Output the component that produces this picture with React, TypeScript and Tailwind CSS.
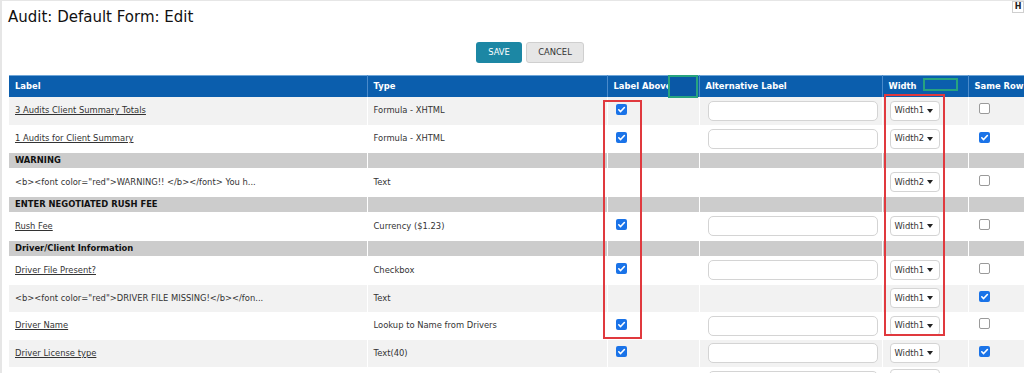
import React from "react";

type Row =
  | { kind: "group"; label: string }
  | {
      kind: "field";
      label: string;
      link: boolean;
      type: string;
      above: boolean | null;
      alt: boolean;
      width: string;
      same: boolean | null;
      shade: boolean;
      h: string;
    };

const rows: Row[] = [
  { kind: "field", label: "3 Audits Client Summary Totals", link: true, type: "Formula - XHTML", above: true, alt: true, width: "Width1", same: false, shade: true, h: "h-[28px]" },
  { kind: "field", label: "1 Audits for Client Summary", link: true, type: "Formula - XHTML", above: true, alt: true, width: "Width2", same: true, shade: false, h: "h-[28px]" },
  { kind: "group", label: "WARNING" },
  { kind: "field", label: '<b><font color="red">WARNING!! </b></font> You h...', link: false, type: "Text", above: null, alt: false, width: "Width2", same: false, shade: false, h: "h-[29px]" },
  { kind: "group", label: "ENTER NEGOTIATED RUSH FEE" },
  { kind: "field", label: "Rush Fee", link: true, type: "Currency ($1.23)", above: true, alt: true, width: "Width1", same: false, shade: false, h: "h-[29px]" },
  { kind: "group", label: "Driver/Client Information" },
  { kind: "field", label: "Driver File Present?", link: true, type: "Checkbox", above: true, alt: true, width: "Width1", same: false, shade: false, h: "h-[29px]" },
  { kind: "field", label: '<b><font color="red">DRIVER FILE MISSING!</b></fon...', link: false, type: "Text", above: null, alt: false, width: "Width1", same: true, shade: true, h: "h-[27px]" },
  { kind: "field", label: "Driver Name", link: true, type: "Lookup to Name from Drivers", above: true, alt: true, width: "Width1", same: false, shade: false, h: "h-[28px]" },
  { kind: "field", label: "Driver License type", link: true, type: "Text(40)", above: true, alt: true, width: "Width1", same: true, shade: true, h: "h-[27px]" },
  // next row only peeks in at the bottom edge
  { kind: "field", label: "", link: true, type: "", above: null, alt: true, width: "", same: null, shade: false, h: "h-[28px]" },
];

function Check({ on }: { on: boolean }) {
  if (on) {
    return (
      <span className="inline-flex h-[11px] w-[11px] items-center justify-center rounded-[2px] bg-[#1a73e8]">
        <svg width="9" height="9" viewBox="0 0 10 10">
          <path d="M2 5.3l2 2L8.2 2.8" fill="none" stroke="#fff" strokeWidth="1.8" strokeLinecap="round" strokeLinejoin="round" />
        </svg>
      </span>
    );
  }
  return <span className="inline-block h-[11px] w-[11px] rounded-[2px] border border-[#9a9a9a] bg-white" />;
}

function WidthSelect({ value }: { value: string }) {
  return (
    <span className="inline-flex h-[20px] w-[50px] items-center justify-between rounded-[4px] border border-[#d4d4d4] bg-white pl-[4px] pr-[6px] text-[8.4px] text-[#333]">
      {value}
      {value && (
        <svg width="6" height="4" viewBox="0 0 6 4">
          <path d="M0 0h6L3 4z" fill="#222" />
        </svg>
      )}
    </span>
  );
}

export default function App() {
  return (
    <div className="relative h-[373px] w-[1024px] overflow-hidden border-l-2 border-t border-[#e6e6e6] bg-white font-['DejaVu_Sans',sans-serif] text-[#333]">
      <span className="absolute right-0 top-0 flex h-[12px] w-[12px] items-center justify-center border border-[#cfcfcf] bg-white text-[8px] font-bold text-[#222]">
        H
      </span>
      <h1 className="pl-[6px] pt-[5px] text-[15px] leading-[22px] text-[#111]">Audit: Default Form: Edit</h1>

      <div className="mt-[14px] flex justify-center gap-[4px] pl-[34px]">
        <button className="h-[21px] w-[46px] rounded-[3px] bg-[#1c87a4] text-[8.4px] text-white">SAVE</button>
        <button className="h-[21px] w-[58px] rounded-[3px] border border-[#cfcfcf] bg-[#e6e6e6] text-[8.4px] text-[#333]">CANCEL</button>
      </div>

      <div className="relative ml-[7px] mt-[12px] w-[1100px]">
        <table className="w-[1100px] table-fixed border-collapse text-[8.4px]">
          <colgroup>
            <col className="w-[358px]" />
            <col className="w-[240px]" />
            <col className="w-[92px]" />
            <col className="w-[183px]" />
            <col className="w-[86px]" />
            <col className="w-[141px]" />
          </colgroup>
          <thead>
            <tr className="h-[21px] border-t border-[#6fa6d8] bg-[#0b5ead] text-left font-bold text-white">
              <th className="px-[6px]">Label</th>
              <th className="border-l border-[#4a8acb] px-[6px]">Type</th>
              <th className="border-l border-[#4a8acb] px-[6px] whitespace-nowrap">Label Above</th>
              <th className="border-l border-[#4a8acb] px-[6px]">Alternative Label</th>
              <th className="border-l border-[#4a8acb] px-[6px]">Width</th>
              <th className="border-l border-[#4a8acb] px-[6px] whitespace-nowrap">Same Row</th>
            </tr>
          </thead>
          <tbody>
            {rows.map((r, i) =>
              r.kind === "group" ? (
                <tr key={i} className="h-[15px] bg-[#cccccc] font-bold text-[#111]">
                  <td className="px-[6px] whitespace-nowrap">{r.label}</td>
                  <td className="border-l border-white" />
                  <td className="border-l border-white" />
                  <td className="border-l border-white" />
                  <td className="border-l border-white" />
                  <td className="border-l border-white" />
                </tr>
              ) : (
                <tr key={i} className={`${r.h} ${r.shade ? "bg-[#f2f2f2]" : "bg-white"}`}>
                  <td className="px-[6px] whitespace-nowrap">
                    <span className={r.link ? "underline" : ""}>{r.label}</span>
                  </td>
                  <td className="border-l border-white px-[6px] whitespace-nowrap">{r.type}</td>
                  <td className="border-l border-white pl-[8px] align-middle">
                    {r.above !== null && <Check on={r.above} />}
                  </td>
                  <td className="border-l border-white pl-[8px]">
                    {r.alt && <div className="h-[20px] w-[170px] rounded-[5px] border border-[#d4d4d4] bg-white" />}
                  </td>
                  <td className="border-l border-white pl-[7px]">
                    <WidthSelect value={r.width} />
                  </td>
                  <td className="border-l border-white pl-[10px]">
                    {r.same !== null && <Check on={r.same} />}
                  </td>
                </tr>
              )
            )}
          </tbody>
        </table>

        {/* annotation boxes */}
        <div className="absolute left-[594px] top-[25px] h-[239px] w-[39px] border-2 border-[#e0393e]" />
        <div className="absolute left-[875px] top-[19px] h-[242px] w-[61px] border-2 border-[#e0393e]" />
        <div className="absolute left-[659px] top-0 h-[23px] w-[30px] border-2 border-[#27a37f] bg-[#0a58a6]" />
        <div className="absolute left-[914px] top-[3px] h-[13px] w-[35px] border-2 border-[#27a37f]" />
      </div>
    </div>
  );
}
